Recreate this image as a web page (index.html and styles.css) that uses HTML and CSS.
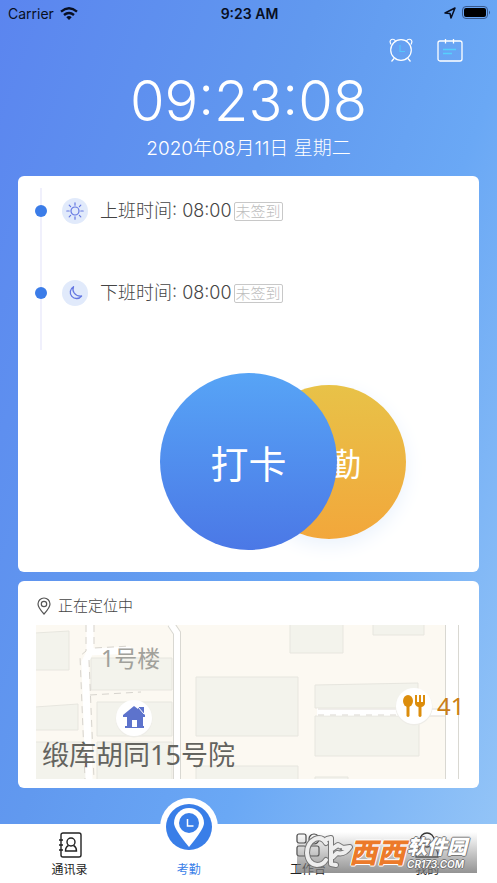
FILE: index.html
```html
<!DOCTYPE html>
<html lang="zh-CN">
<head>
<meta charset="utf-8">
<meta name="viewport" content="width=device-width, initial-scale=1">
<title>考勤</title>
<link rel="stylesheet" href="styles.css">
</head>
<body>
<header class="status">
  <div class="status-left"><span>Carrier</span>
    <svg width="18" height="13" viewBox="0 0 18 13"><g fill="none" stroke="#080f22" stroke-width="2.4"><path d="M1 4.6Q9-2 17 4.6"/><path d="M4 8Q9 3.800 14 8"/></g><path d="M6.300 10.200Q9 8 11.700 10.200L9 13z" fill="#080f22"/></svg>
  </div>
  <strong class="status-time">9:23 AM</strong>
  <div class="status-right">
    <svg width="12" height="12" viewBox="0 0 12 12"><path d="M1 6L11 1L7 11L6 6.500z" fill="none" stroke="#080f22" stroke-width="1.500" stroke-linejoin="round"/></svg>
    <svg width="29" height="14" viewBox="0 0 29 14"><rect x=".5" y=".5" width="25" height="12" rx="3.500" fill="none" stroke="#38598c"/><rect x="2" y="2" width="22" height="9" rx="2" fill="#000"/><path d="M27 4.500q2 2 0 4z" fill="#38598c"/></svg>
  </div>
</header>
<main class="content">
  <div class="tools">
    <button class="tool" aria-label="闹钟"><svg width="24" height="24" viewBox="0 0 24 24" fill="none" stroke="#fff" stroke-width="1.200"><circle cx="12" cy="12" r="10.300"/><path d="M2 6.500Q0 2.500 2.500 1.500Q5 .6 6.500 3M22 6.500q2-4-.5-5Q19 .6 17.500 3M5 20.500l-2.500 3M19 20.500l2.500 3"/><path d="M11 7v6.500h5" stroke="#55c6fb"/></svg></button>
    <button class="tool" aria-label="日历"><svg width="26" height="24" viewBox="0 0 26 24" fill="none" stroke="#fff" stroke-width="1.300"><rect x="1" y="3" width="24" height="20" rx="2"/><path d="M8.500 1v4.500M16.500 1v4.500"/><path d="M6 11.500h13M6 15.500h9" stroke="#55d0fd"/></svg></button>
  </div>
  <h1 class="clock">09:23:08</h1>
  <p class="date">2020年08月11日 星期二</p>

  <section class="card punch">
    <ul class="timeline">
      <li class="shift"><i class="dot"></i><span class="badge"><svg width="18" height="18" viewBox="0 0 18 18" fill="none" stroke="#6477e2" stroke-width="1.200" stroke-linecap="round"><circle cx="9" cy="9" r="4"/><path d="M9 .8v2.400M9 14.800v2.400M.8 9h2.400M14.800 9h2.400M3.200 3.200l1.400 1.400M13.400 13.400l1.400 1.400M3.200 14.800l1.400-1.400M13.400 4.600l1.400-1.400"/></svg></span><span class="shift-text">上班时间: 08:00</span><span class="tag">未签到</span></li>
      <li class="shift"><i class="dot"></i><span class="badge"><svg width="18" height="18" viewBox="0 0 18 18" fill="none" stroke="#6477e2" stroke-width="1.300" stroke-linejoin="round"><path d="M7.500 2.700A6.300 6.300 0 1 0 15.600 12Q10.600 12.500 8.200 9Q6.100 6 7.500 2.700z"/></svg></span><span class="shift-text">下班时间: 08:00</span><span class="tag">未签到</span></li>
    </ul>
    <div class="actions">
      <button class="round main">打卡</button>
      <button class="round field">外勤</button>
    </div>
  </section>

  <section class="card location">
    <p class="locating"><svg width="14" height="18" viewBox="0 0 14 18" fill="none" stroke="#555" stroke-width="1.200"><path d="M7 17Q1 10.500 1 7a6 6 0 0 1 12 0Q13 10.500 7 17z"/><circle cx="7" cy="7" r="2.700"/></svg>正在定位中</p>
    <svg class="map" viewBox="0 0 425 154" role="img" aria-label="地图">
      <rect width="425" height="154" fill="#fcf9f2"/>
      <g fill="#f3f3ec" stroke="#e7e6df">
        <path d="M-1 8L33 6V45H-1zM-1 82L42 79V105H-1zM55 33H136V65H55zM61 77H136V111H61zM-1 117H51V155H-1zM61 117H136V155H61z"/>
        <path d="M160 52H262V111H160zM254-1H307V28H254zM337-1H388V10H337zM279 60L382 58V83H279zM279 91H383V131H279zM160 141H262V155H160zM279 152H312V155H279z"/>
      </g>
      <path d="M54 0V27L49 37L53 154M53 27L95 25" fill="none" stroke="#fff" stroke-width="7"/>
      <path d="M50 0V26L44 31L49 154M58 0V23L95 21M53 35L58 154M54 70L105 67" fill="none" stroke="#d7d4ce" stroke-dasharray="7 5"/>
      <path d="M135-1L141 8V155" fill="none" stroke="#d9d8d2" stroke-width="8"/>
      <path d="M135-1L141 8V155" fill="none" stroke="#fff" stroke-width="6"/>
      <path d="M281 87H410" stroke="#fff" stroke-width="7"/>
      <path d="M282 84H410M390 91H410" stroke="#e1ded8"/><path d="M282 90H365" stroke="#dad7d0" stroke-dasharray="6 6"/>
      <rect x="409.500" y="-1" width="13" height="156" fill="#fff" stroke="#d9d8d2"/><path d="M423 0h2v154h-2z" fill="#fff"/>
      <g class="map-label"><text x="65" y="42" font-size="23" fill="#a1a19b">1号楼</text><text x="6" y="140" font-size="27" fill="#64645f">缎库胡同15号院</text></g>
      <circle cx="98" cy="94" r="18.500" fill="#eeede8"/><circle cx="98" cy="93" r="18" fill="#fff"/>
      <path fill="#5d73cc" fill-rule="evenodd" d="M87 90L98 81L102 84V82H108V89L109 90V92H107V101H108V103H89V101H91V92H87zM96 95V102H101V95z"/>
      <path d="M102 82l6 7" stroke="#fff" stroke-width="1"/>
      <circle cx="378" cy="82" r="18.500" fill="#eeede8"/><circle cx="378" cy="81" r="18" fill="#fff"/>
      <g fill="#dc8d0c"><ellipse cx="372" cy="76" rx="5" ry="6"/><path d="M370.500 80h3v11q-1.500 2-3 0zM379 70h2v7h2v-7h2v7h2v-7h2v8q0 3-3.500 4v9q-1.500 2-3 0v-9q-3.500-1-3.500-4z"/></g>
      <text class="map-label" x="401" y="90" font-size="24" fill="#cb7e16">41</text>
    </svg>
  </section>
</main>

<nav class="tabs">
  <a class="tab" href="#contacts"><svg width="24" height="26" viewBox="0 0 24 26" fill="none" stroke="#222" stroke-width="1.400"><rect x="3" y="1" width="20" height="24" rx="2"/><path d="M1 8h4M1 13h4M1 18h4" stroke-width="1.600"/><circle cx="13" cy="10" r="4"/><path d="M10.500 13.500Q7.500 15 7.500 19H18.500Q18.500 15 15.500 13.500"/></svg><span>通讯录</span></a>
  <a class="tab active" href="#attendance"><span class="pin"><svg width="46" height="46" viewBox="0 0 46 46"><circle cx="23" cy="23" r="23" fill="#397ee8"/><path d="M23 43Q8 25 8 19a15 15 0 0 1 30 0Q38 25 23 43z" fill="#fff"/><circle cx="23" cy="19" r="10" fill="#397ee8"/><path d="M21.500 15v7h6" fill="none" stroke="#fff" stroke-width="1.500"/></svg></span><span>考勤</span></a>
  <a class="tab" href="#workspace"><svg width="24" height="26" viewBox="0 0 24 26" fill="none" stroke="#444" stroke-width="1.200"><rect x="1" y="2" width="9" height="9" rx="2"/><circle cx="18" cy="7" r="5"/><rect x="1" y="14" width="9" height="10" rx="2"/><rect x="13" y="14" width="10" height="10" rx="2"/></svg><span>工作台</span></a>
  <a class="tab" href="#me"><svg width="24" height="26" viewBox="0 0 24 26" fill="none" stroke="#333" stroke-width="1.300"><circle cx="12" cy="8" r="7"/><path d="M8 10q4 4 8 0M7 13Q1 16 1 25H23Q23 16 17 13"/></svg><span>我的</span></a>
  <div class="watermark">
    <svg class="wm-logo" width="56" height="40" viewBox="0 0 56 40" fill="none" stroke-linecap="round" stroke-linejoin="round"><g stroke="#777" stroke-width="6"><path d="M29 10Q25 3 18 6Q10 10 10 20Q11 31 20 32Q26 32 29 27M30 6L34 5V31L39 32M35 16L41 12L46 15L53 14Q48 22 40 20L36 24"/></g><g stroke="#eee" stroke-width="4"><path d="M29 10Q25 3 18 6Q10 10 10 20Q11 31 20 32Q26 32 29 27M30 6L34 5V31L39 32M35 16L41 12L46 15L53 14Q48 22 40 20L36 24"/></g><circle cx="44" cy="16" r="1" fill="#777"/></svg>
    <b class="wm-main">西西</b>
    <span class="wm-side"><b>软件园</b><small>CR173.COM</small></span>
  </div>
</nav>
</body>
</html>
```
FILE: styles.css
```css
* { box-sizing: border-box; }
body {
  margin: 0;
  min-height: 100vh;
  display: flex;
  flex-direction: column;
  font-family: Inter, "Noto Sans CJK SC", sans-serif;
  background: linear-gradient(110deg, #5b85ef 0%, #6199ef 39%, #6aa8f5 64%, #96c6f7 100%);
}
svg { display: block; flex: none; }
button { border: 0; padding: 0; background: none; font: inherit; cursor: pointer; }
h1, p, ul { margin: 0; padding: 0; }

.status {
  display: grid;
  grid-template-columns: 1fr auto 1fr;
  align-items: center;
  height: 26px;
  padding: 0 6px 0 8px;
  font-size: 14px;
  color: #080f22;
}
.status-left, .status-right { display: flex; align-items: center; gap: 6px; }
.status-right { justify-content: flex-end; }
.status-time { font-size: 14px; font-weight: 600; }

.content { flex: 1; padding: 12px 18px 36px; }
.tools { display: flex; justify-content: flex-end; gap: 24px; padding-right: 16px; height: 24px; }
.clock { height: 72px; line-height: 78px; font-size: 56px; font-weight: 300; color: #fff; text-align: center; }
.date { height: 42px; line-height: 30px; font-size: 19px; font-weight: 300; color: #fff; text-align: center; }

.card { background: #fff; border-radius: 6px; }
.punch { padding: 12px 17px 22px; }
.timeline { position: relative; list-style: none; }
.timeline::before {
  content: "";
  position: absolute;
  left: 5px;
  top: 0;
  bottom: 2px;
  width: 2px;
  background: #f0f0fc;
}
.shift { display: flex; align-items: center; height: 82px; padding-bottom: 36px; }
.dot { position: relative; width: 12px; height: 12px; border-radius: 50%; background: #3b7ce8; }
.badge {
  display: flex;
  align-items: center;
  justify-content: center;
  width: 26px;
  height: 26px;
  margin: 0 12px 0 15px;
  border-radius: 50%;
  background: #e1eafb;
}
.shift-text { font-size: 18px; line-height: 26px; font-weight: 300; color: #444; }
.tag {
  margin-left: 2px;
  padding: 0 1px;
  border: 1px solid #c8c8c8;
  border-radius: 2px;
  font-size: 15px;
  line-height: 17px;
  font-weight: 300;
  color: #bdbdbd;
}
.actions { display: flex; align-items: center; justify-content: center; padding-top: 21px; }
.round { flex: none; border-radius: 50%; color: #fff; }
.main {
  position: relative;
  z-index: 1;
  width: 177px;
  height: 177px;
  font-size: 38px;
  background: linear-gradient(#57a4f6, #4b78e6);
}
.field {
  width: 154px;
  height: 154px;
  margin: 0 -69px 0 -85px;
  font-size: 32px;
  background: linear-gradient(#e8c248, #f2a73b);
  box-shadow: 0 6px 20px #eaf2fc;
}

.location { margin-top: 9px; padding: 15px 18px 9px; }
.locating { display: flex; align-items: center; gap: 7px; height: 20px; margin-bottom: 9px; padding-left: 1px; font-size: 15px; line-height: 20px; font-weight: 300; color: #444; }
.map { width: 100%; height: auto; }
.map-label { font-family: "Noto Sans", "Noto Sans CJK SC", sans-serif; }

.tabs {
  position: relative;
  display: grid;
  grid-template-columns: repeat(4, 1fr);
  grid-template-rows: 59px;
  padding: 0 10px;
  background: #fff;
}
.tab {
  display: flex;
  flex-direction: column;
  align-items: center;
  justify-content: flex-end;
  gap: 3px;
  min-height: 0;
  padding-bottom: 4px;
  font-size: 12px;
  line-height: 18px;
  color: #222;
  text-decoration: none;
}
.active { color: #397ee8; }
.pin { padding: 6px; margin-bottom: 2px; border-radius: 50%; background: #fff; }
.watermark {
  position: absolute;
  right: 20px;
  bottom: 10px;
  display: flex;
  align-items: center;
  width: 180px;
  height: 41px;
  background: linear-gradient(rgba(170, 170, 170, 0), rgba(120, 120, 120, .8));
}
.wm-logo { margin-right: -4px; }
.wm-main {
  font-size: 28px;
  line-height: 32px;
  font-weight: 900;
  font-style: italic;
  color: #ec7a2a;
  text-shadow: 1px 0 #fff, -1px 0 #fff, 0 1px #fff, 0 -1px #fff;
}
.wm-side { display: flex; flex-direction: column; margin-left: 2px; font-style: italic; color: #fff; white-space: nowrap; text-shadow: 1px 0 #777, -1px 0 #777, 0 1px #777, 0 -1px #777; }
.wm-side b { font-size: 20px; line-height: 22px; font-weight: 900; }
.wm-side small { font-size: 10px; line-height: 12px; font-weight: 600; }
```
